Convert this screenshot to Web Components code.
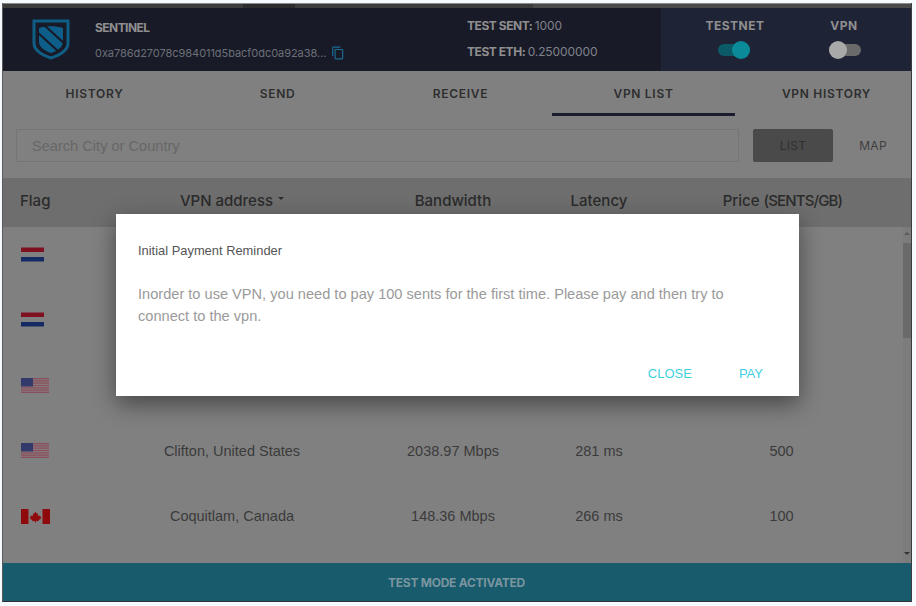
<!DOCTYPE html>
<html>
<head>
<meta charset="utf-8">
<title>Sentinel</title>
<style>
  html, body { margin: 0; padding: 0; background: #f6f9fd; overflow: hidden; }
  body { font-family: "Liberation Sans", Arial, sans-serif; }
</style>
</head>
<body>
<app-window>
  <sentinel-header></sentinel-header>
  <tab-bar></tab-bar>
  <search-bar></search-bar>
  <vpn-table>
    <vpn-row flag="nl"></vpn-row>
    <vpn-row flag="nl"></vpn-row>
    <vpn-row flag="us"></vpn-row>
    <vpn-row flag="us" city="Clifton, United States" bandwidth="2038.97 Mbps" latency="281 ms" price="500"></vpn-row>
    <vpn-row flag="ca" city="Coquitlam, Canada" bandwidth="148.36 Mbps" latency="266 ms" price="100"></vpn-row>
  </vpn-table>
  <status-bar>TEST MODE ACTIVATED</status-bar>
  <modal-dialog heading="Initial Payment Reminder">
    Inorder to use VPN, you need to pay 100 sents for the first time. Please pay and then try to connect to the vpn.
  </modal-dialog>
</app-window>

<script>
const HEAD_FONT = '"Inter", "Liberation Sans", sans-serif';

class AppWindow extends HTMLElement {
  constructor() {
    super();
    this.attachShadow({ mode: 'open' }).innerHTML = `
      <style>
        :host {
          display: flex;
          flex-direction: column;
          position: relative;
          box-sizing: border-box;
          width: 910px;
          height: 599px;
          margin: 3px 0 0 2px;
          border-left: 1px solid #5a5a5a;
          border-right: 1px solid #3c3c3c;
          border-bottom: 1px solid #333;
          background: #808080;
          overflow: hidden;
        }
        .strip {
          height: 5px;
          flex: none;
          background: linear-gradient(90deg, #3c3c3c 0 240px, #2c2c2c 240px 292px, #3c3c3c 292px 530px, #4a4a4a 530px);
          border-top: 1px solid #8a8a8a;
          box-sizing: border-box;
        }
      </style>
      <div class="strip"></div>
      <slot></slot>
    `;
  }
}

class SentinelHeader extends HTMLElement {
  constructor() {
    super();
    this.attachShadow({ mode: 'open' }).innerHTML = `
      <style>
        :host {
          display: flex;
          flex: none;
          height: 63px;
          background: #191a27;
          font-family: ${HEAD_FONT};
          font-weight: 700;
          font-size: 12px;
          color: #8f8f8f;
        }
        .brand { width: 464px; display: flex; align-items: center; padding-left: 29px; box-sizing: border-box; }
        .logo { width: 38px; height: 41px; margin-right: 25px; margin-top: -1px; flex: none; }
        .name { letter-spacing: -.55px; line-height: 16px; margin-top: 1px; }
        .address {
          font-weight: 400;
          font-size: 11px;
          letter-spacing: -.05px;
          color: #6b7078;
          margin-top: 10px;
          display: flex;
          align-items: center;
          line-height: 14px;
          white-space: nowrap;
        }
        .address svg { width: 14px; height: 14px; margin-left: 5px; fill: #1c6a92; }
        .balance { width: 194px; display: flex; flex-direction: column; gap: 11px; padding-top: 10px; box-sizing: border-box; }
        .balance div { line-height: 15px; letter-spacing: -.45px; }
        .balance span { font-weight: 400; color: #7f838c; letter-spacing: -.1px; }
        .controls { flex: 1; background: #1f2336; display: flex; }
        .control { display: flex; flex-direction: column; align-items: center; padding-top: 10px; gap: 8px; box-sizing: border-box; }
        .control.a { width: 148px; }
        .control.a toggle-switch { margin-right: 2px; }
        .control.b { width: 70px; }
        .control.b toggle-switch { margin-left: 2px; }
        .control span { line-height: 15px; letter-spacing: .5px; }
      </style>
      <div class="brand">
        <svg class="logo" viewBox="0 0 38 41">
          <path d="M2 2H36V24C36 31 28 36 19 39C10 36 2 31 2 24Z" fill="none" stroke="#0f5e85" stroke-width="3"/>
          <path d="M7 9C14 6.500 24 6.500 31 9V23C31 28 25 32 19 34C13 32 7 28 7 23Z" fill="#0d5f8a"/>
          <path d="M11 5L34 26M5 13L27 33" stroke="#191a27" stroke-width="2.200" fill="none"/>
        </svg>
        <div>
          <div class="name">SENTINEL</div>
          <div class="address">0xa786d27078c984011d5bacf0dc0a92a38…
            <svg viewBox="0 0 24 24"><path d="M16 1H4c-1.100 0-2 .9-2 2v14h2V3h12V1zm3 4H8c-1.100 0-2 .9-2 2v14c0 1.100.9 2 2 2h11c1.100 0 2-.9 2-2V7c0-1.100-.9-2-2-2zm0 16H8V7h11v14z"/></svg>
          </div>
        </div>
      </div>
      <div class="balance">
        <div>TEST SENT: <span>1000</span></div>
        <div>TEST ETH: <span>0.25000000</span></div>
      </div>
      <div class="controls">
        <div class="control a"><span>TESTNET</span><toggle-switch checked></toggle-switch></div>
        <div class="control b"><span>VPN</span><toggle-switch></toggle-switch></div>
      </div>
    `;
  }
}

class ToggleSwitch extends HTMLElement {
  constructor() {
    super();
    this.attachShadow({ mode: 'open' }).innerHTML = `
      <style>
        :host { display: block; position: relative; width: 32px; height: 18px; }
        .track { position: absolute; left: 0; right: 0; top: 3px; height: 12px; border-radius: 6px; background: #6a6a6a; }
        .knob { position: absolute; left: 0; top: 0; width: 18px; height: 18px; border-radius: 50%; background: #a9a9a9; }
        :host([checked]) .track { background: #0b5a68; }
        :host([checked]) .knob { left: 14px; background: #0b8a9a; }
      </style>
      <div class="track"></div>
      <div class="knob"></div>
    `;
  }
}

class TabBar extends HTMLElement {
  constructor() {
    super();
    const tabs = ['HISTORY', 'SEND', 'RECEIVE', 'VPN LIST', 'VPN HISTORY'];
    this.attachShadow({ mode: 'open' }).innerHTML = `
      <style>
        :host {
          display: flex;
          flex: none;
          height: 45px;
          overflow: hidden;
          font-family: ${HEAD_FONT};
          font-weight: 600;
          font-size: 12px;
          letter-spacing: .7px;
          color: #2e2e2e;
        }
        .tab {
          flex: 0 0 183px;
          box-sizing: border-box;
          text-align: center;
          padding-top: 15px;
          line-height: 16px;
        }
        .tab.active { border-bottom: 3px solid #1b1d2e; }
      </style>
      ${tabs.map((t) => `<div class="tab ${t === 'VPN LIST' ? 'active' : ''}">${t}</div>`).join('')}
    `;
  }
}

class SearchBar extends HTMLElement {
  constructor() {
    super();
    this.attachShadow({ mode: 'open' }).innerHTML = `
      <style>
        :host {
          display: flex;
          flex: none;
          height: 62px;
          box-sizing: border-box;
          padding: 13px 0 0 13px;
          overflow: hidden;
          font-size: 14.600px;
          font-family: "Liberation Sans", Arial, sans-serif;
        }
        .input {
          flex: none;
          width: 723px;
          height: 33px;
          box-sizing: border-box;
          border: 1px solid #757575;
          padding-left: 15px;
          line-height: 32px;
          color: #676767;
        }
        .switch { display: flex; flex: none; margin-left: 14px; height: 33px; font-size: 12px; font-family: ${HEAD_FONT}; letter-spacing: .3px; }
        .switch div { width: 80px; text-align: center; line-height: 34px; color: #3f3f3f; }
        .switch .on { background: #4a4a4a; color: #303030; border-radius: 2px; }
      </style>
      <div class="input">Search City or Country</div>
      <div class="switch"><div class="on">LIST</div><div>MAP</div></div>
    `;
  }
}

class VpnTable extends HTMLElement {
  constructor() {
    super();
    this.attachShadow({ mode: 'open' }).innerHTML = `
      <style>
        :host { display: flex; flex-direction: column; flex: 1; min-height: 0; position: relative; }
        .head {
          display: grid;
          grid-template-columns: 119px 220px 222px 70px 1fr;
          flex: none;
          height: 45px;
          padding-bottom: 4px;
          align-items: center;
          background: #6e6e6e;
          color: #2b2b2b;
          font-family: ${HEAD_FONT};
          font-size: 15px;
          font-weight: 500;
          text-align: center;
          white-space: nowrap;
        }
        .head .flag { text-align: left; padding-left: 17px; }
        .head .price { padding-left: 20px; }
        .head .unit { letter-spacing: -.85px; }
        .caret {
          display: inline-block;
          border: 3.500px solid transparent;
          border-top-color: #2b2b2b;
          border-bottom: 0;
          margin-left: 5px;
          vertical-align: 6px;
        }
        .body { flex: 1; min-height: 0; overflow: hidden; position: relative; }
        .rows { margin-top: -5.700px; }
        .scroll { position: absolute; right: 0; top: 0; bottom: 0; width: 8px; background: #7c7c7c; }
        .thumb { position: absolute; left: 0; right: 0; top: 16px; height: 95px; background: #6a6a6a; }
        .arrow { position: absolute; left: 1px; border: 3px solid transparent; }
        .arrow.up { top: 5px; border-bottom-color: #5a5a5a; border-top: 0; }
        .arrow.down { bottom: 8px; border-top-color: #333; border-bottom: 0; }
      </style>
      <div class="head">
        <div class="flag">Flag</div>
        <div>VPN address<span class="caret"></span></div>
        <div>Bandwidth</div>
        <div>Latency</div>
        <div class="price">Price <span class="unit">(SENTS/GB)</span></div>
      </div>
      <div class="body">
        <div class="rows"><slot></slot></div>
        <div class="scroll">
          <div class="arrow up"></div>
          <div class="thumb"></div>
          <div class="arrow down"></div>
        </div>
      </div>
    `;
  }
}

class VpnRow extends HTMLElement {
  constructor() {
    super();
    const get = (name) => this.getAttribute(name) || '';
    this.attachShadow({ mode: 'open' }).innerHTML = `
      <style>
        :host {
          display: grid;
          grid-template-columns: 119px 220px 222px 70px 1fr;
          height: 65.600px;
          align-items: center;
          text-align: center;
          font-size: 14.500px;
          color: #3b3b3b;
          white-space: nowrap;
        }
        .flag { padding-left: 18px; display: flex; }
        .price { padding-left: 18px; }
      </style>
      <div class="flag"><vpn-flag code="${get('flag')}"></vpn-flag></div>
      <div>${get('city')}</div>
      <div>${get('bandwidth')}</div>
      <div>${get('latency')}</div>
      <div class="price">${get('price')}</div>
    `;
  }
}

class VpnFlag extends HTMLElement {
  constructor() {
    super();
    const flags = {
      nl: `<svg width="23" height="15" viewBox="0 0 23 15">
          <rect y="0.500" width="23" height="4.500" fill="#7e1020"/>
          <rect y="10" width="23" height="4.500" fill="#152a63"/>
        </svg>`,
      us: `<svg width="28" height="15" viewBox="0 0 28 15">
          <rect width="28" height="15" fill="#867a7e"/>
          <path d="M0 .6H28M0 2.900H28M0 5.200H28M0 7.500H28M0 9.800H28M0 12.100H28M0 14.400H28" stroke="#8a4f5c" stroke-width="1.200"/>
          <rect width="12" height="8.500" fill="#33396a"/>
        </svg>`,
      ca: `<svg width="29" height="15" viewBox="0 0 29 15">
          <rect width="7.500" height="15" fill="#8f0a0c"/>
          <rect x="21.500" width="7.500" height="15" fill="#8f0a0c"/>
          <path d="M14.500 2.500L15.800 4.800L17.200 4.300L16.700 7L18.500 6.300L18.900 7.600L20.300 7.500L19.700 9.100L20.300 9.600L17.500 11.300L17.800 12.200L15 11.900V13.500H14V11.900L11.200 12.200L11.500 11.300L8.700 9.600L9.300 9.100L8.700 7.500L10.100 7.600L10.500 6.300L12.300 7L11.800 4.300L13.200 4.800Z" fill="#8f0a0c"/>
        </svg>`,
    };
    this.attachShadow({ mode: 'open' }).innerHTML = `
      <style>:host { display: block; height: 15px; } svg { display: block; }</style>
      ${flags[this.getAttribute('code')] || ''}
    `;
  }
}

class StatusBar extends HTMLElement {
  constructor() {
    super();
    this.attachShadow({ mode: 'open' }).innerHTML = `
      <style>
        :host {
          display: block;
          flex: none;
          height: 38px;
          background: #175b6c;
          color: #7a959f;
          font-family: ${HEAD_FONT};
          font-weight: 700;
          font-size: 12px;
          letter-spacing: -.25px;
          line-height: 40px;
          text-align: center;
          padding-right: 1px;
          overflow: hidden;
        }
      </style>
      <slot></slot>
    `;
  }
}

class ModalDialog extends HTMLElement {
  constructor() {
    super();
    this.attachShadow({ mode: 'open' }).innerHTML = `
      <style>
        :host {
          display: block;
          position: absolute;
          left: 113px;
          top: 211px;
          width: 683px;
          height: 182px;
          box-sizing: border-box;
          background: #fff;
          box-shadow: 0 8px 22px rgba(0, 0, 0, .45);
          padding: 29px 22px 0;
          font-family: "Liberation Sans", Arial, sans-serif;
        }
        h2 { margin: 0; font-size: 12.900px; font-weight: 400; line-height: 16px; color: #555; }
        p { margin: 24px 0 0; font-size: 14.600px; line-height: 22px; color: #9a9a9a; width: 600px; }
        .actions { display: flex; justify-content: flex-end; margin-top: 37px; padding-right: 14px; gap: 47px; font-size: 13px; color: #3fd0e0; line-height: 20px; }
      </style>
      <h2>${this.getAttribute('heading')}</h2>
      <p><slot></slot></p>
      <div class="actions"><span>CLOSE</span><span>PAY</span></div>
    `;
  }
}

customElements.define('app-window', AppWindow);
customElements.define('sentinel-header', SentinelHeader);
customElements.define('toggle-switch', ToggleSwitch);
customElements.define('tab-bar', TabBar);
customElements.define('search-bar', SearchBar);
customElements.define('vpn-table', VpnTable);
customElements.define('vpn-row', VpnRow);
customElements.define('vpn-flag', VpnFlag);
customElements.define('status-bar', StatusBar);
customElements.define('modal-dialog', ModalDialog);
</script>
</body>
</html>
